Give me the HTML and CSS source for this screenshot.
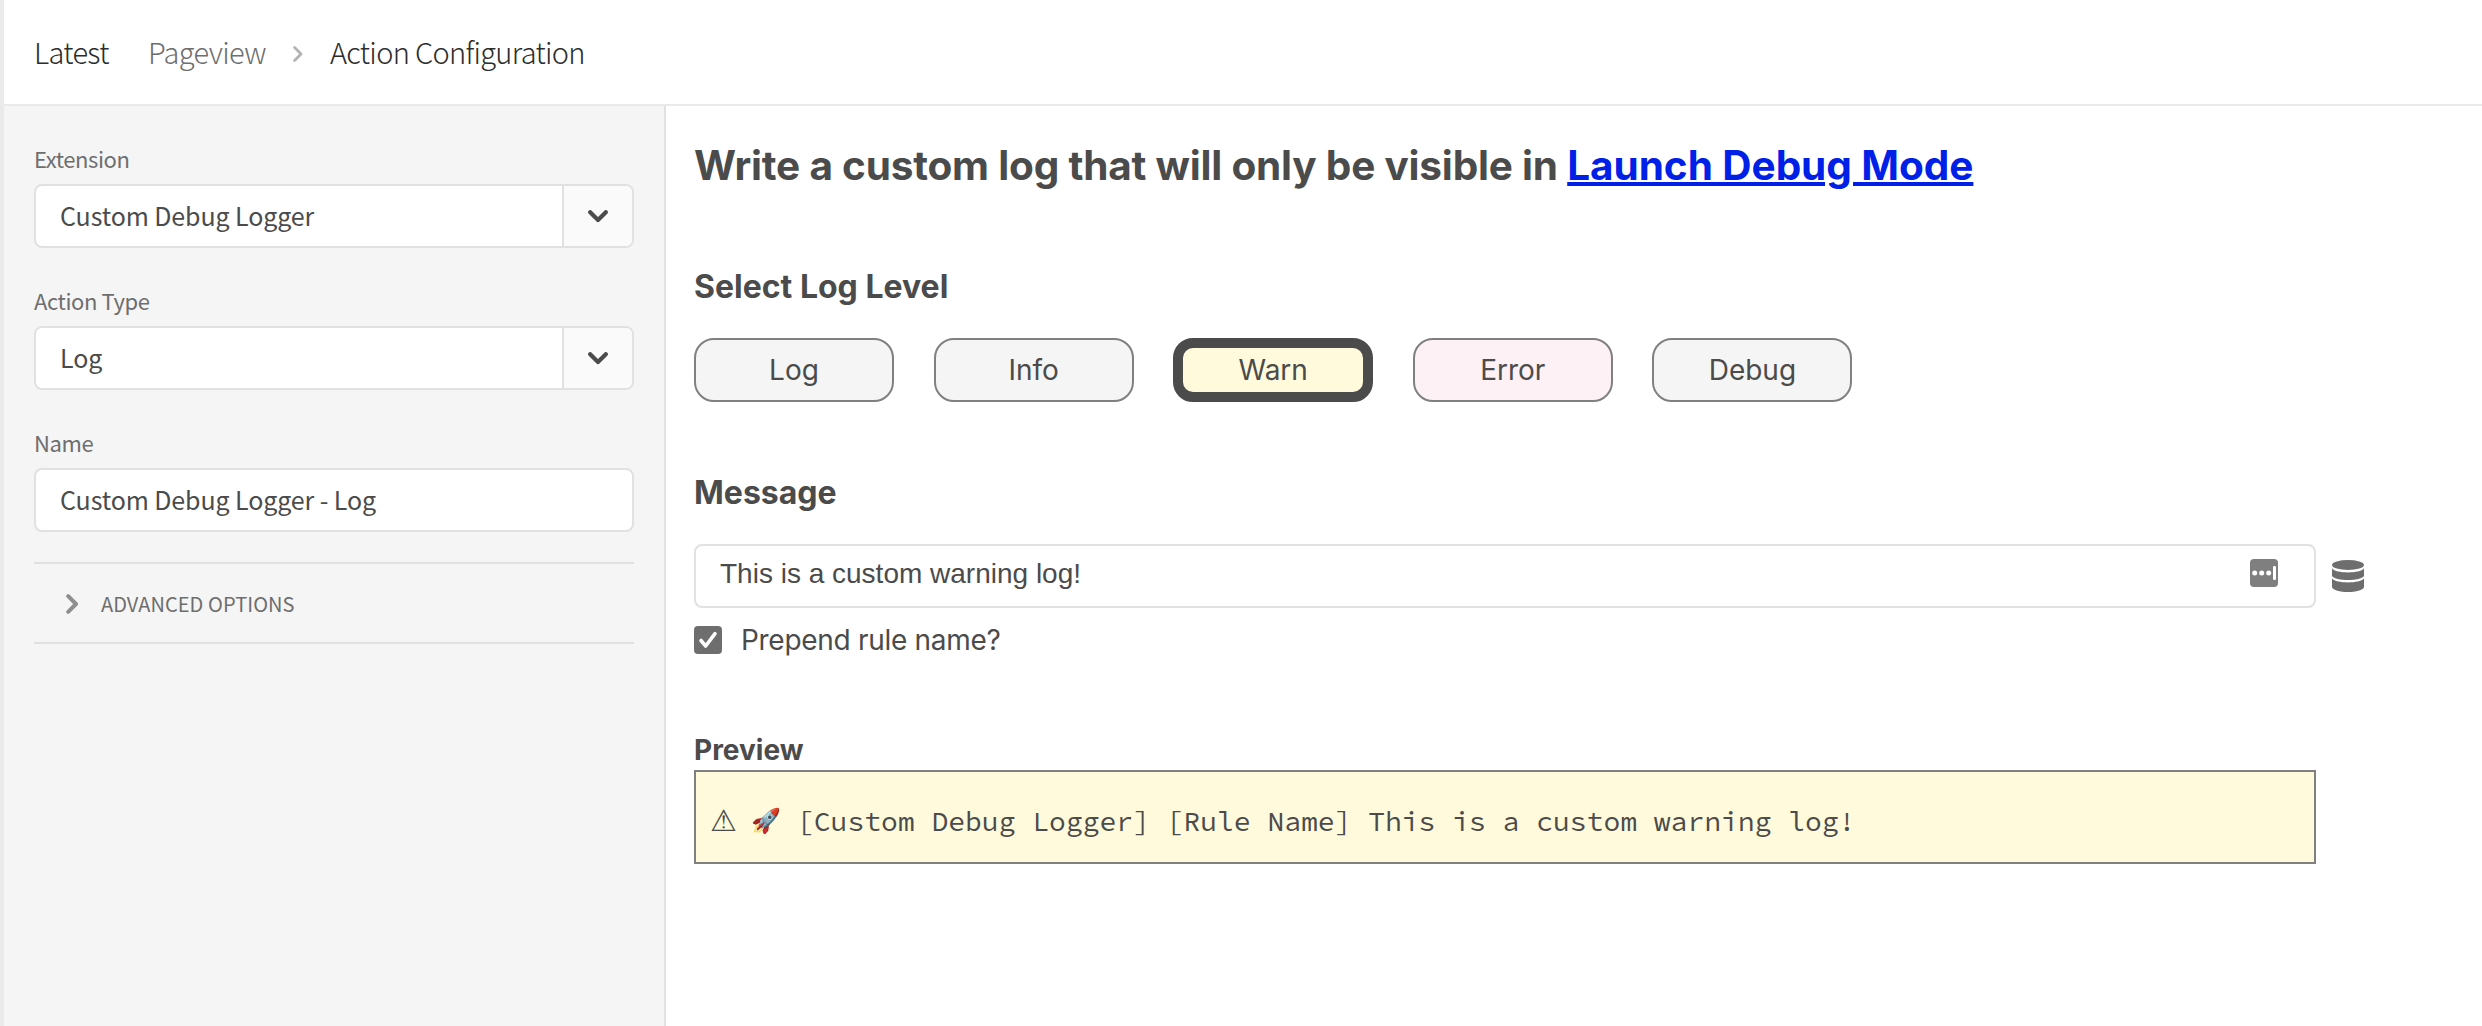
FILE: index.html
```html
<!DOCTYPE html>
<html lang="en">
<head>
<meta charset="utf-8">
<title>Action Configuration</title>
<link rel="stylesheet" href="styles.css">
</head>
<body>
<div class="app">
  <header class="topbar">
    <span class="crumb crumb-latest">Latest</span>
    <span class="crumb crumb-link">Pageview</span>
    <svg class="crumb-sep" width="10" height="16" viewBox="0 0 10 16"><path d="M1.6 1.6 8 8l-6.4 6.4" fill="none" stroke="#b3b3b3" stroke-width="2.8" stroke-linecap="round" stroke-linejoin="round"/></svg>
    <span class="crumb crumb-current">Action Configuration</span>
  </header>
  <div class="columns">
    <aside class="sidebar">
      <label class="label">Extension</label>
      <div class="field">
        <span class="value">Custom Debug Logger</span>
        <span class="drop"><svg width="20" height="13" viewBox="0 0 20 13"><path d="M2.2 2.2 10 10l7.800-7.800" fill="none" stroke="#4b4b4b" stroke-width="4.200" stroke-linecap="round" stroke-linejoin="round"/></svg></span>
      </div>
      <label class="label label-type">Action Type</label>
      <div class="field">
        <span class="value">Log</span>
        <span class="drop"><svg width="20" height="13" viewBox="0 0 20 13"><path d="M2.2 2.2 10 10l7.800-7.800" fill="none" stroke="#4b4b4b" stroke-width="4.200" stroke-linecap="round" stroke-linejoin="round"/></svg></span>
      </div>
      <label class="label">Name</label>
      <div class="field"><span class="value">Custom Debug Logger - Log</span></div>
      <div class="accordion">
        <svg width="13" height="20" viewBox="0 0 13 20"><path d="M2.200 2.200 10 10l-7.800 7.800" fill="none" stroke="#8e8e8e" stroke-width="4" stroke-linecap="round" stroke-linejoin="round"/></svg>
        <span>ADVANCED OPTIONS</span>
      </div>
    </aside>
    <main class="main">
      <h1 class="title">Write a custom log that will only be visible in <a class="link" href="#">Launch Debug Mode</a></h1>
      <h2 class="heading">Select Log Level</h2>
      <div class="levels">
        <button class="level">Log</button>
        <button class="level">Info</button>
        <button class="level level-warn">Warn</button>
        <button class="level level-error">Error</button>
        <button class="level">Debug</button>
      </div>
      <h2 class="heading heading-message">Message</h2>
      <div class="message-row">
        <div class="message">
          <span>This is a custom warning log!</span>
          <svg class="autofill" width="28" height="28" viewBox="0 0 28 28"><rect width="28" height="28" rx="4" fill="#7f7f7f"/><g fill="#fff"><circle cx="4.700" cy="14" r="2.500"/><circle cx="11.700" cy="14" r="2.500"/><circle cx="18.700" cy="14" r="2.500"/><rect x="23" y="7" width="3" height="14" rx="1.200"/></g></svg>
        </div>
        <svg class="database" width="32" height="32" viewBox="0 0 32 32" fill="#6e6e6e"><ellipse cx="16" cy="5" rx="16" ry="5"/><path d="M0 8.500c2.500 2.600 8.500 3.900 16 3.900s13.500-1.300 16-3.900V16c-2 2.600-8.500 4.100-16 4.100S2 18.600 0 16z"/><path d="M0 18.500c2.500 2.600 8.500 3.900 16 3.900s13.500-1.300 16-3.900v8.700c-1 2.900-8 4.800-16 4.800S1 30.100 0 27.200z"/></svg>
      </div>
      <div class="check-row">
        <svg width="28" height="28" viewBox="0 0 28 28"><rect width="28" height="28" rx="4" fill="#6e6e6e"/><path d="M7 14.500l4.700 5.500L21 7.700" fill="none" stroke="#fff" stroke-width="3.600" stroke-linecap="round" stroke-linejoin="round"/></svg>
        <span>Prepend rule name?</span>
      </div>
      <h3 class="preview-title">Preview</h3>
      <div class="preview"><span class="warn-sign">⚠</span><span class="rocket">🚀</span><span>[Custom Debug Logger] [Rule Name] This is a custom warning log!</span></div>
    </main>
  </div>
</div>
</body>
</html>
```
FILE: styles.css
```css
* { box-sizing: border-box; }

body {
  margin: 0;
  background: #fff;
  color: #4b4b4b;
  font-family: Inter, "Liberation Sans", sans-serif;
}

.app {
  display: flex;
  flex-direction: column;
  height: 1026px;
  border-left: 4px solid #eaeaea;
}

svg { display: block; flex: none; }

.topbar {
  display: flex;
  align-items: center;
  height: 106px;
  padding: 0 0 3px 30px;
  border-bottom: 2px solid #eaeaea;
  font: 300 29px/40px "Noto Sans CJK SC", "Open Sans", sans-serif;
  letter-spacing: -0.68px;
  color: #2c2c2c;
  white-space: nowrap;
}

.crumb-latest { width: 114px; }
.crumb-link { width: 145px; color: #6e6e6e; }
.crumb-sep { margin-right: 27px; margin-top: 6px; }

.columns { display: flex; flex: 1; }

.sidebar {
  width: 662px;
  padding: 36px 30px 0;
  background: #f5f5f5;
  border-right: 2px solid #e1e1e1;
  font-family: "Noto Sans CJK SC", "Open Sans", sans-serif;
}

.label {
  display: block;
  height: 42px;
  font-size: 22px;
  line-height: 32px;
  letter-spacing: -0.42px;
  color: #6e6e6e;
}

.field {
  display: flex;
  height: 64px;
  margin-bottom: 36px;
  border: 2px solid #e1e1e1;
  border-radius: 8px;
  background: #fff;
  overflow: hidden;
}

.value {
  flex: 1;
  padding-left: 24px;
  font-size: 25px;
  line-height: 58px;
  letter-spacing: -0.1px;
}

.drop {
  display: flex;
  align-items: center;
  justify-content: center;
  width: 70px;
  border-left: 2px solid #e1e1e1;
  background: #fafafa;
}

.accordion {
  display: flex;
  align-items: center;
  gap: 22px;
  height: 82px;
  margin-top: -6px;
  padding: 2px 0 0 32px;
  border-top: 2px solid #e1e1e1;
  border-bottom: 2px solid #e1e1e1;
  font-size: 20px;
  line-height: 30px;
  letter-spacing: 0.08px;
  color: #6e6e6e;
}

.main {
  flex: 1;
  padding: 35px 0 0 28px;
}

.title {
  margin: 0 0 76px;
  font-size: 40.5px;
  line-height: 50px;
  letter-spacing: -0.2px;
  font-weight: 700;
}

.link {
  color: #0020e8;
  letter-spacing: -0.05px;
  text-decoration-thickness: 4px;
}

.heading {
  margin: 0;
  font-size: 32px;
  line-height: 40px;
  font-weight: 700;
}

.levels {
  display: flex;
  gap: 39.6px;
  margin: 31px 0 71px;
}

.level {
  width: 200px;
  height: 64px;
  padding: 0;
  border: 2px solid #808080;
  border-radius: 20px;
  background: #f5f5f5;
  color: #4b4b4b;
  font: 400 28px/34px Inter, "Liberation Sans", sans-serif;
}

.level-warn { border: 10px solid #4b4b4b; background: #fffadb; }
.level-error { background: #fdf1f5; }

.message-row {
  display: flex;
  align-items: center;
  gap: 16px;
  margin-top: 31px;
}

.message {
  display: flex;
  align-items: center;
  justify-content: space-between;
  width: 1622px;
  height: 64px;
  padding: 0 36px 4px 24px;
  border: 2px solid #e1e1e1;
  border-radius: 8px;
  font: 28px/34px "Liberation Sans", Arial, sans-serif;
}

.autofill { margin-top: -2px; }

.check-row {
  display: flex;
  align-items: center;
  gap: 19px;
  margin-top: 15px;
  font-size: 28px;
  line-height: 34px;
  letter-spacing: -0.3px;
}

.preview-title {
  margin: 73px 0 0;
  font-size: 28px;
  line-height: 40px;
  font-weight: 700;
}

.preview {
  display: flex;
  align-items: center;
  width: 1622px;
  height: 94px;
  padding: 8px 0 0 14px;
  border: 2px solid #808080;
  background: #fffadb;
  font: 28px/36px "Source Code Pro", "Liberation Mono", monospace;
  white-space: pre;
}

.warn-sign { width: 41px; font-family: "DejaVu Sans", sans-serif; font-size: 30px; }
.rocket { width: 46px; font-size: 24px; }
```
